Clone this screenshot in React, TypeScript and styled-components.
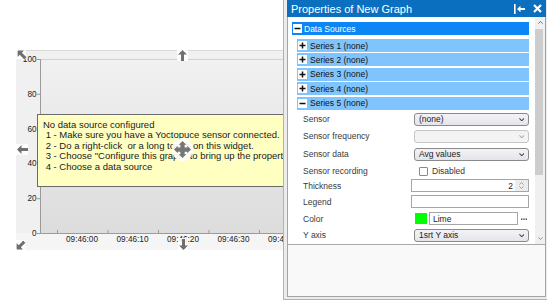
import React from 'react'
import styled, { createGlobalStyle } from 'styled-components'

const GlobalStyle = createGlobalStyle`
  html, body { margin: 0; padding: 0; background: #fff; }
  body { font-family: "Liberation Sans", Arial, sans-serif; }
  * { box-sizing: border-box; }
`

const Desktop = styled.div`
  position: relative;
  width: 550px;
  height: 300px;
  overflow: hidden;
  background: #fff;
`

/* ---------- graph widget ---------- */

const GraphWidget = styled.div`
  position: absolute;
  left: 16px;
  top: 50px;
  width: 270px;
  height: 200px;
  overflow: hidden;
  background: #f0f0f0;
`

const ChartSvg = styled.svg`
  display: block;
  font-family: "Liberation Sans", Arial, sans-serif;
  font-size: 8.2px;
`

const Tooltip = styled.div`
  position: absolute;
  left: 21px;
  top: 64px;
  right: -2px;
  height: 73px;
  padding: 5px 5px;
  overflow: hidden;
  background: #ffffc2;
  border: 1px solid #6a6a6a;
  color: #1a1a1a;
  font-size: 9.5px;
  line-height: 10.4px;
  white-space: pre;
`

const Handle = styled.div<{ $x: number; $y: number; $w: number; $h: number }>`
  position: absolute;
  left: ${(p) => p.$x}px;
  top: ${(p) => p.$y}px;
  width: ${(p) => p.$w}px;
  height: ${(p) => p.$h}px;
  display: flex;
  align-items: center;
  justify-content: center;
  background: rgba(255, 255, 255, 0.85);
`

const MoveHandle = styled.div`
  position: absolute;
  left: 156px;
  top: 88px;
  width: 21px;
  height: 23px;
  border-radius: 50%;
  background: rgba(255, 255, 255, 0.9);
  display: flex;
  align-items: center;
  justify-content: center;
`

const Arrow = ({ rotate = 0 }: { rotate?: number }) => (
  <svg width="9" height="11" viewBox="0 0 9 11" style={{ transform: `rotate(${rotate}deg)` }}>
    <path d="M4.5 0 L9 4.5 L6 4.5 L6 11 L3 11 L3 4.5 L0 4.5 Z" fill="#6f6f6f" />
  </svg>
)

const MoveCross = () => (
  <svg width="17" height="17" viewBox="0 0 16 16">
    <path
      d="M8 0 L11.5 3.5 L10 3.5 L10 6 L12.5 6 L12.5 4.5 L16 8 L12.5 11.5 L12.5 10 L10 10 L10 12.5 L11.5 12.5 L8 16 L4.5 12.5 L6 12.5 L6 10 L3.5 10 L3.5 11.5 L0 8 L3.5 4.5 L3.5 6 L6 6 L6 3.5 L4.5 3.5 Z"
      fill="#767676"
    />
  </svg>
)

const yTicks = [100, 80, 60, 40, 20, 0]
const xLabels = ['09:46:00', '09:46:10', '09:46:20', '09:46:30', '09:46:40']
const plotTop = 9
const plotBottom = 183
const plotLeft = 24
const yOf = (v: number) => plotBottom - ((plotBottom - plotTop) * v) / 100

const Chart = () => (
  <ChartSvg width="300" height="200" viewBox="0 0 300 200">
    <defs>
      <linearGradient id="plotBg" x1="0" y1="0" x2="0" y2="1">
        <stop offset="0" stopColor="#f1f1f1" />
        <stop offset="1" stopColor="#dcdcdc" />
      </linearGradient>
    </defs>
    <rect x="0" y="0" width="300" height="200" fill="#f0f0f0" />
    <line x1="0" y1="0.5" x2="300" y2="0.5" stroke="#d9d9d9" />
    <rect x="0" y="183" width="300" height="17" fill="#f5f5f5" />
    <rect x={plotLeft} y={plotTop} width={300 - plotLeft} height={plotBottom - plotTop} fill="url(#plotBg)" />
    <line x1={plotLeft} y1={plotTop + 0.5} x2="300" y2={plotTop + 0.5} stroke="#d2d2d2" />
    <line x1={plotLeft + 0.5} y1={plotTop} x2={plotLeft + 0.5} y2={plotBottom} stroke="#9a9a9a" />
    <line x1={plotLeft} y1={plotBottom + 0.5} x2="300" y2={plotBottom + 0.5} stroke="#9a9a9a" />
    {yTicks.map((v) => (
      <g key={v}>
        <line x1="21" y1={yOf(v) + 0.5} x2={plotLeft} y2={yOf(v) + 0.5} stroke="#9a9a9a" />
        <text x="20.5" y={yOf(v) + 3} textAnchor="end" fill="#222">
          {v}
        </text>
      </g>
    ))}
    {xLabels.map((l, i) => (
      <g key={l}>
        <line x1={41.5 + i * 50.5} y1={plotBottom - 3} x2={41.5 + i * 50.5} y2={plotBottom + 1} stroke="#9a9a9a" />
        <text x={66 + i * 50.5} y="192" textAnchor="middle" fill="#222">
          {l}
        </text>
      </g>
    ))}
  </ChartSvg>
)

/* ---------- properties panel ---------- */

const Panel = styled.div`
  position: absolute;
  left: 283px;
  top: 0;
  width: 264px;
  height: 300px;
  display: flex;
  flex-direction: column;
  padding: 0 1px 2px 3px;
  background: #ececec;
  border-left: 1px solid #b2b2b2;
  border-bottom: 1px solid #b2b2b2;
`

const TitleBar = styled.div`
  height: 17px;
  flex: none;
  display: flex;
  align-items: center;
  padding-left: 4px;
  background: #0b6fc0;
  color: #fff;
  font-size: 11px;
`

const TitleText = styled.span`
  flex: 1;
`

const TitleButtons = styled.div`
  display: flex;
  align-items: center;
  gap: 8px;
  padding-right: 4px;
`

const PanelBody = styled.div`
  flex: 1;
  display: flex;
  flex-direction: column;
  background: #fff;
  border: 1px solid #a4a4a4;
  border-top: none;
`

const ScrollRegion = styled.div`
  height: 227px;
  flex: none;
  display: flex;
`

const Content = styled.div`
  flex: 1;
  padding: 5px 6px 0 4px;
  font-size: 8.5px;
  line-height: 10px;
`

const SectionHeader = styled.div`
  height: 13px;
  display: flex;
  align-items: center;
  gap: 2px;
  background: #0d86f5;
  color: #fff;
`

const SeriesList = styled.div`
  display: flex;
  flex-direction: column;
  gap: 1.4px;
  margin-top: 4px;
  padding-left: 5px;
`

const SeriesRow = styled.div`
  height: 13px;
  display: flex;
  align-items: center;
  gap: 3px;
  background: #80c4fd;
  color: #111;
`

const ToggleBox = styled.span`
  width: 9px;
  height: 9px;
  margin-left: 1px;
  background: #fff;
  display: flex;
  align-items: center;
  justify-content: center;
`

const PropList = styled.div`
  margin-top: 1.4px;
  padding-left: 11px;
`

const PropRow = styled.div<{ $h: number }>`
  height: ${(p) => p.$h}px;
  display: grid;
  grid-template-columns: 108px 118px;
  align-items: center;
  color: #3a3a3a;
`

const SelectBox = styled.div<{ $disabled?: boolean }>`
  height: 13px;
  margin-left: 3px;
  display: flex;
  align-items: center;
  justify-content: space-between;
  padding: 0 4px 0 4px;
  border: 1px solid ${(p) => (p.$disabled ? '#c6c6c6' : '#8a8a8a')};
  border-radius: 3px;
  background: ${(p) => (p.$disabled ? '#f3f3f3' : 'linear-gradient(#f3f3f7, #e4e4ea)')};
  color: #222;
`

const TextBox = styled.div<{ $w?: number }>`
  height: 13px;
  width: ${(p) => (p.$w ? `${p.$w}px` : '100%')};
  display: flex;
  align-items: center;
  padding: 0 3px;
  border: 1px solid #a6a6a6;
  background: #fff;
  color: #222;
`

const NumberBox = styled(TextBox)`
  justify-content: flex-end;
  padding: 0 0 0 3px;
`

const Spinner = styled.span`
  width: 13px;
  height: 11px;
  margin-left: 2px;
  display: flex;
  flex-direction: column;
  align-items: center;
  justify-content: center;
  gap: 1px;
  background: #ececec;
`

const CheckRow = styled.label`
  display: flex;
  align-items: center;
  gap: 4px;
  margin-left: 8px;
  color: #333;
`

const CheckBox = styled.span`
  width: 9px;
  height: 9px;
  border: 1px solid #8a8a8a;
  border-radius: 1px;
  background: #fff;
`

const ColorField = styled.div`
  display: flex;
  align-items: center;
  margin-left: 4px;
`

const Swatch = styled.span<{ $color: string }>`
  width: 12px;
  height: 11px;
  margin-right: 2px;
  background: ${(p) => p.$color};
`

const MoreButton = styled.span`
  margin-left: 3px;
  display: flex;
  align-items: center;
`

const Scrollbar = styled.div`
  width: 10px;
  flex: none;
  display: flex;
  flex-direction: column;
  background: #f0f0f0;
`

const ScrollArrow = styled.div`
  height: 11px;
  display: flex;
  align-items: center;
  justify-content: center;
`

const ScrollTrack = styled.div`
  flex: 1;
  padding-top: 1px;
`

const ScrollThumb = styled.div`
  width: 8px;
  height: 146px;
  background: #cdcdcd;
`

const Footer = styled.div`
  flex: 1;
  background: #f9f9f9;
  border-top: 1px solid #a8a8a8;
`

const Chevron = ({ up = false, color = '#444', w = 6 }: { up?: boolean; color?: string; w?: number }) => (
  <svg width={w} height={w * 0.6} viewBox="0 0 6 3.6">
    <path
      d={up ? 'M0.5 3.1 L3 0.6 L5.5 3.1' : 'M0.5 0.5 L3 3 L5.5 0.5'}
      fill="none"
      stroke={color}
      strokeWidth="1.1"
    />
  </svg>
)

const Sign = ({ minus }: { minus?: boolean }) => (
  <svg width="7" height="7" viewBox="0 0 7 7">
    <rect x="0.5" y="2.75" width="6" height="1.5" fill="#111" />
    {!minus && <rect x="2.75" y="0.5" width="1.5" height="6" fill="#111" />}
  </svg>
)

const PinIcon = () => (
  <svg width="11" height="10" viewBox="0 0 11 10">
    <rect x="0" y="0" width="1.6" height="10" fill="#fff" />
    <path d="M3 5 L6.5 1.8 L6.5 4 L11 4 L11 6 L6.5 6 L6.5 8.2 Z" fill="#fff" />
  </svg>
)

const CloseIcon = () => (
  <svg width="9" height="9" viewBox="0 0 9 9">
    <path d="M1 1 L8 8 M8 1 L1 8" stroke="#fff" strokeWidth="2.2" />
  </svg>
)

const DotsIcon = () => (
  <svg width="6" height="2" viewBox="0 0 6 2">
    <rect x="0" y="0.5" width="1.3" height="1.3" fill="#222" />
    <rect x="2.3" y="0.5" width="1.3" height="1.3" fill="#222" />
    <rect x="4.6" y="0.5" width="1.3" height="1.3" fill="#222" />
  </svg>
)

const Select = ({ value, disabled }: { value?: string; disabled?: boolean }) => (
  <SelectBox $disabled={disabled}>
    <span>{value}</span>
    <Chevron color={disabled ? '#aaa' : '#444'} w={5.5} />
  </SelectBox>
)

const series = ['Series 1 (none)', 'Series 2 (none)', 'Series 3 (none)', 'Series 4 (none)', 'Series 5 (none)']

const PropertiesPanel = () => (
  <Panel>
    <TitleBar>
      <TitleText>Properties of New Graph</TitleText>
      <TitleButtons>
        <PinIcon />
        <CloseIcon />
      </TitleButtons>
    </TitleBar>
    <PanelBody>
      <ScrollRegion>
        <Content>
          <SectionHeader>
            <ToggleBox>
              <Sign minus />
            </ToggleBox>
            Data Sources
          </SectionHeader>
          <SeriesList>
            {series.map((s, i) => (
              <SeriesRow key={s}>
                <ToggleBox>
                  <Sign minus={i === 4} />
                </ToggleBox>
                {s}
              </SeriesRow>
            ))}
          </SeriesList>
          <PropList>
            <PropRow $h={17}>
              <span>Sensor</span>
              <Select value="(none)" />
            </PropRow>
            <PropRow $h={17}>
              <span>Sensor frequency</span>
              <Select disabled />
            </PropRow>
            <PropRow $h={19}>
              <span>Sensor data</span>
              <Select value="Avg values" />
            </PropRow>
            <PropRow $h={15}>
              <span>Sensor recording</span>
              <CheckRow>
                <CheckBox />
                Disabled
              </CheckRow>
            </PropRow>
            <PropRow $h={14}>
              <span>Thickness</span>
              <NumberBox>
                2
                <Spinner>
                  <Chevron up color="#999" w={5} />
                  <Chevron color="#999" w={5} />
                </Spinner>
              </NumberBox>
            </PropRow>
            <PropRow $h={18}>
              <span>Legend</span>
              <TextBox />
            </PropRow>
            <PropRow $h={16}>
              <span>Color</span>
              <ColorField>
                <Swatch $color="#00ff00" />
                <TextBox $w={89}>Lime</TextBox>
                <MoreButton>
                  <DotsIcon />
                </MoreButton>
              </ColorField>
            </PropRow>
            <PropRow $h={17}>
              <span>Y axis</span>
              <Select value="1srt Y axis" />
            </PropRow>
          </PropList>
        </Content>
        <Scrollbar>
          <ScrollArrow>
            <Chevron up color="#666" w={5} />
          </ScrollArrow>
          <ScrollTrack>
            <ScrollThumb />
          </ScrollTrack>
          <ScrollArrow>
            <Chevron color="#888" w={5} />
          </ScrollArrow>
        </Scrollbar>
      </ScrollRegion>
      <Footer />
    </PanelBody>
  </Panel>
)

const tooltipText = `No data source configured
 1 - Make sure you have a Yoctopuce sensor connected.
 2 - Do a right-click  or a long touch on this widget.
 3 - Choose "Configure this graph" to bring up the properties
 4 - Choose a data source`

export default function App() {
  return (
    <>
      <GlobalStyle />
      <Desktop>
        <GraphWidget>
          <Chart />
          <Tooltip>{tooltipText}</Tooltip>
          <Handle $x={161} $y={0} $w={11} $h={11}>
            <Arrow />
          </Handle>
          <Handle $x={162} $y={188} $w={10} $h={12}>
            <Arrow rotate={180} />
          </Handle>
          <Handle $x={0} $y={94} $w={12} $h={11}>
            <Arrow rotate={-90} />
          </Handle>
          <Handle $x={0} $y={0} $w={10} $h={9}>
            <Arrow rotate={-45} />
          </Handle>
          <Handle $x={0} $y={190} $w={9} $h={10}>
            <Arrow rotate={-135} />
          </Handle>
          <MoveHandle>
            <MoveCross />
          </MoveHandle>
        </GraphWidget>
        <PropertiesPanel />
      </Desktop>
    </>
  )
}
